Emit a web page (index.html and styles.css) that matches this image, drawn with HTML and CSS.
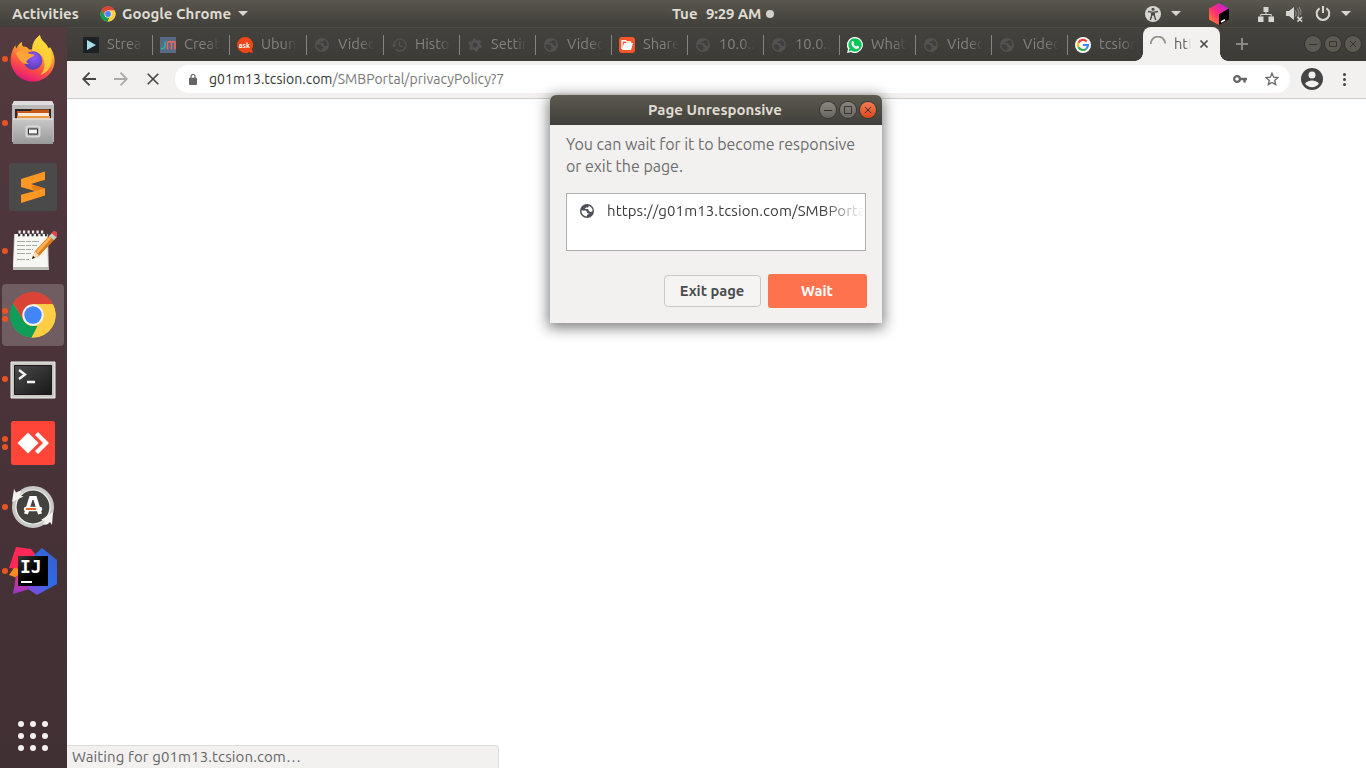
FILE: index.html
```html
<!DOCTYPE html>
<html lang="en">
<head>
<meta charset="utf-8">
<title>Page Unresponsive</title>
<link rel="stylesheet" href="styles.css">
</head>
<body>
<svg class="defs" width="0" height="0" aria-hidden="true">
  <defs>
    <linearGradient id="ffBody" x1=".7" y1="0" x2=".3" y2="1"><stop offset="0" stop-color="#fff44f"/><stop offset=".35" stop-color="#ffa930"/><stop offset=".65" stop-color="#ff5540"/><stop offset="1" stop-color="#e2127e"/></linearGradient>
    <radialGradient id="ffGlobe" cx=".55" cy=".35" r=".65"><stop offset="0" stop-color="#9059ff"/><stop offset="1" stop-color="#5b3cae"/></radialGradient>
    <linearGradient id="silver" x1="0" y1="0" x2="0" y2="1"><stop offset="0" stop-color="#c9c9c9"/><stop offset="1" stop-color="#999"/></linearGradient>
    <linearGradient id="term" x1="0" y1="0" x2="1" y2="1"><stop offset="0" stop-color="#4b4b4b"/><stop offset="1" stop-color="#171717"/></linearGradient>
    <linearGradient id="cube" x1="0" y1="1" x2="1" y2="0"><stop offset="0" stop-color="#ff9419"/><stop offset=".45" stop-color="#ff2f72"/><stop offset="1" stop-color="#af1df5"/></linearGradient>
    <linearGradient id="ijBlue" x1="0" y1="1" x2="1" y2="0"><stop offset="0" stop-color="#8f44d8"/><stop offset=".5" stop-color="#2c6de9"/><stop offset="1" stop-color="#3c58c9"/></linearGradient>
    <linearGradient id="ijPurple" x1="0" y1="0" x2="0" y2="1"><stop offset="0" stop-color="#e43a77"/><stop offset="1" stop-color="#9a35ca"/></linearGradient>
    <linearGradient id="ijBox" x1="0" y1="0" x2="1" y2="1"><stop offset="0" stop-color="#3a3a3a"/><stop offset=".5" stop-color="#000"/></linearGradient>
    <symbol id="globe" viewBox="0 0 16 16"><circle cx="8" cy="8" r="7" fill="currentColor"/><path class="land" d="M2.400 7.600h3.400c1.300 0 2.200.7 2.200 1.700v.8h1.500v1.400H8v1.900A5.600 5.600 0 0 1 2.400 7.600zM10 2.900 9 4.400H7L5.800 6.100h3.300l.6 1.400c.4 1 1.200 1.400 2.100 1.400l1.800-.7A5.600 5.600 0 0 0 10 2.900z"/></symbol>
    <symbol id="chrome" viewBox="0 0 48 48"><circle cx="24" cy="24" r="22.500" fill="#ffce44"/><path fill="#da4437" d="M4.100 12.500A22.500 22.500 0 0 1 44 13.200H24L14 29.500z"/><path fill="#0f9d58" d="M4.100 12.500 14.600 29.400Q18 35 24 35h4.500L22.600 46.500A22.500 22.500 0 0 1 4.100 12.500z"/><path fill="#ffce44" d="M24 13.200h20A22.500 22.500 0 0 1 22.600 46.500l10.900-18z"/><circle cx="24" cy="24" r="10.700" fill="#f3f3f3"/><circle cx="24" cy="24" r="8.700" fill="#4285f4"/></symbol>
  </defs>
</svg>

<div class="desktop">
  <header class="panel">
    <span class="activities">Activities</span>
    <div class="app-menu"><svg width="16" height="16"><use href="#chrome"/></svg><span>Google Chrome</span><i class="caret"></i></div>
    <div class="clock"><span>Tue</span><span>9:29 AM</span><i></i></div>
    <div class="indicators">
      <svg class="access" width="16" height="16" viewBox="0 0 16 16"><circle cx="8" cy="8" r="8" fill="#d8d6d2"/><circle cx="8" cy="3.300" r="1.500" fill="#4b4a44"/><path d="M3 5.500 8 6.400l5-.9M8 6v3.500M6.700 6v3.500L5.300 14M9.300 6v3.500L10.700 14" fill="none" stroke="#4b4a44" stroke-width="1.400"/></svg>
      <i class="caret caret-a"></i>
      <svg class="toolbox" width="20" height="22" viewBox="0 0 20 22"><path fill="url(#cube)" d="M10 0 20 5.400v11L10 22 0 16.500v-11z"/><path fill="#000" d="m10 11.300 10-5.700v10.800L10 22z"/><path stroke="#fff" stroke-width="1.800" d="m12 19 4-2.200"/></svg>
      <svg class="network" width="16" height="16" viewBox="0 0 16 16"><path fill="#d8d6d2" d="M5.500 1h5v5h-5zM0 10.500h5.500V16H0zM10.500 10.500H16V16h-5.500z"/><path d="M8 6v2.500M2.700 10.500v-2h10.600v2" fill="none" stroke="#d8d6d2"/></svg>
      <svg class="volume" width="18" height="16" viewBox="0 0 18 16"><path fill="#d8d6d2" d="M0 5h3l5-4v13l-5-4H0z"/><path d="M9.300 4.500q2 3 0 6M11.300 2.500q3.400 4.800 0 9.600M13 1q3 4.500 1.500 8" fill="none" stroke="#8b8983" stroke-width="1.100"/><path d="m11.500 11 4.500 4.500m0-4.500-4.500 4.500" stroke="#d8d6d2" stroke-width="1.700"/></svg>
      <svg class="power" width="16" height="16" viewBox="0 0 16 16"><path d="M4.600 2.300a6.300 6.300 0 1 0 6.800 0M8 0v7" fill="none" stroke="#d8d6d2" stroke-width="2"/></svg>
      <i class="caret caret-b"></i>
    </div>
  </header>

  <div class="workspace">
    <nav class="dock">
      <div class="dock-item one"><svg width="48" height="48" viewBox="0 0 48 48"><path fill="url(#ffBody)" d="M31 0c0 3 2 5 5 8 1.700 1.500 2.500 3.500 3 5.500 1 0 1.500-.5 2-1.500 4 6 6 13 3.500 20.500A22.300 22.300 0 0 1 2.500 31C0 23 3 15 6.500 10c0 1.500.3 2.500 1 3.500 1-2.500 3-5.500 5.500-6.500-.2 2 .2 3.500 1 4.500 3 0 5 1 6 3h3c0-6 3-11 8-14.500z"/><path fill="#ffd63a" d="M31 0c0 4 2.500 6 5.500 9 5 5 7.500 11 6 19-2 7-6 10-11 12 4-5 5-10 3-16-2-5-6-8-11-8 0-6 3-12 7.500-16z" opacity=".85"/><circle cx="24" cy="25.500" r="9.300" fill="url(#ffGlobe)"/><path fill="#ffa436" d="M7 18c4-4 8-3 12.500.5 3 .8 5 .6 6 1.300-.5 2-4 2.400-6.500 4.700-2 2-2.500 3 1 4.500-7 1-11-5-13-11z"/></svg></div>
      <div class="dock-item one"><svg width="48" height="48" viewBox="0 0 48 48"><path fill="#b9b9b9" d="M5 2h38l2 4v37H3V6z"/><path fill="#dedede" d="M5 2h38l2 4H3z"/><path fill="#272727" d="M6 10h36v12H6z"/><path fill="#c55a19" d="M8 12h14l1-1.500h17V22H8z"/><path fill="#f8e9d8" d="M9 14h31v3H9z"/><path fill="#eb9a43" d="M8 17h33v3H8z"/><path fill="url(#silver)" d="M4 19.500h40V45H4z"/><path stroke="#eee" d="M4 20h40"/><rect x="17.500" y="27.500" width="13" height="10" rx="1.500" fill="#999" stroke="#d9d9d9" stroke-width="2"/><path fill="#f3f3f3" stroke="#333" d="M19.500 30h9v5h-9z"/></svg></div>
      <div class="dock-item"><svg width="48" height="48" viewBox="0 0 48 48"><rect width="48" height="48" rx="3" fill="#4a4a4a"/><path fill="#ff9822" d="m12 16 24-7.500v8.300L22 21l14 4.500v7L12 40v-8.200L26 28l-14-4z"/><path fill="#e57c12" d="m36 25.500-10-3-4 1.200 4 4.300z"/></svg></div>
      <div class="dock-item one"><svg width="48" height="48" viewBox="0 0 48 48"><path fill="#bcbcb6" d="M5 7h34l1 36H4z"/><path fill="#f6f6f3" d="M6 7h32l1 33H4z"/><path stroke="#333" stroke-width="2.300" stroke-dasharray="2.200 2.300" d="M9 8h29"/><path stroke="#eee" stroke-width="3" stroke-dasharray="2.200 2.300" d="M9.500 5h27"/><path stroke="#a9a9a6" stroke-dasharray="8 1 5 1" d="M8 14.500h22M8 18.500h20M8 22.500h16M8 26.500h14M8 32.500h12"/><path fill="#db7b1d" d="m23 32 3-8L41 8l5 4-16 17z"/><path fill="#ffb14f" d="m27 24 14-15 2 1.500-14 16z"/><path fill="#f6ddb8" d="m23 32 3-8 4 4.500z"/><path d="m23 32 1-3 2 1.500z"/><path fill="#c9c9c9" d="m40 9 3-3 5 4-3 3z"/><path fill="#df4545" d="m42.500 6 2-2q3-.5 4.500 3l-2 3z"/></svg></div>
      <div class="dock-item two active"><svg width="48" height="48" viewBox="0 0 48 48"><use href="#chrome"/></svg></div>
      <div class="dock-item one"><svg width="48" height="48" viewBox="0 -1 48 48"><path fill="#c9c9c5" stroke="#f0f0ee" d="M2 6h44v36H2z"/><path fill="url(#term)" stroke="#191919" d="M5.500 9.500h37v29h-37z"/><path d="m10 14 6 4.500-6 4.500M18 26h8" fill="none" stroke="#f5f5f5" stroke-width="2.300"/></svg></div>
      <div class="dock-item two"><svg width="48" height="48" viewBox="0 0 48 48"><rect x="2" y="2" width="44" height="44" rx="2.500" fill="#ff4438"/><path fill="#fff" d="m19 13.500 10.500 10.500L19 34.500 8.500 24zM26 16l3-3 11 11-11 11-3-3 8-8z"/></svg></div>
      <div class="dock-item one"><svg width="48" height="48" viewBox="0 0 48 48"><circle cx="24" cy="24" r="19" fill="#43423e" stroke="#c8c8c6" stroke-width="4"/><circle cx="24" cy="24" r="17" fill="none" stroke="#f1f1ef" stroke-width="1.200"/><path fill="#f2f2ef" d="m5 6 2 3.500q3-2 5-1.500l-1 4.500 3.500 1L3 19z"/><path fill="#f2f2ef" d="m44 29-1 13-2-3q-3 4-7 2l2-3-4-1z"/><path fill="none" stroke="#fff" stroke-width="4" d="m17 31 5-16h4l5 16"/><path stroke="#fff" stroke-width="4.500" stroke-linecap="round" d="M17 26h14"/><path stroke="#ee651e" stroke-width="2" d="M17 26h10"/></svg></div>
      <div class="dock-item one"><svg width="48" height="48" viewBox="0 0 48 48"><path fill="#ff2857" d="m7 0 15 2 9 11-18 10L0 21z"/><path fill="#ff8a23" d="m5 21 9 1v11L0 28z"/><path fill="url(#ijPurple)" d="m7 29 16-3 4 14L4 47z"/><path fill="url(#ijBlue)" d="m33 1 15 12v24L28 48l-9-6 2-30z"/><path fill="url(#ijBox)" d="M9 9h30v30H9z"/><path fill="#fff" d="M12 34h11v2H12z"/><text x="11" y="26" class="ij">IJ</text></svg></div>
      <div class="apps"><i></i><i></i><i></i><i></i><i></i><i></i><i></i><i></i><i></i></div>
    </nav>

    <main class="browser">
      <div class="tabstrip">
        <div class="tab wide"><svg width="16" height="16"><path fill="#1b2226" d="M0 0h16v16H0z"/><path fill="#a9dce9" d="m4 3 9 5-9 5z"/></svg><span>Strea</span></div>
        <div class="tab wide"><svg width="16" height="16"><path fill="#566985" d="M0 0h16v16H0z"/><path d="M5 4.500v4.500q0 3-4 2.500" fill="none" stroke="#29b8a6" stroke-width="1.500"/><path d="M7.500 12.500V5.500q3.500-2 4 0v7m0-7q3.500-2 3.500 0v7" fill="none" stroke="#ee6a5d" stroke-width="1.500"/></svg><span>Creat</span></div>
        <div class="tab wide"><svg width="16" height="16"><path fill="#ef4617" d="M8 0a8 8 0 1 0 4 15l4 1-1-4A8 8 0 0 0 8 0z"/><text x="1.800" y="10.500" class="ask">ask</text></svg><span>Ubun</span></div>
        <div class="tab wide"><svg width="16" height="16"><use href="#globe"/></svg><span>Video</span></div>
        <div class="tab"><svg width="16" height="16" viewBox="0 0 16 16"><path d="M3 8a6 6 0 1 1 1.800 4.200M8.500 4.500v4l3 1.700" fill="none" stroke="currentColor" stroke-width="1.400"/><path fill="currentColor" d="M0 7.500h6l-3 3z"/></svg><span>Histo</span></div>
        <div class="tab"><svg width="16" height="16" viewBox="0 0 16 16"><circle cx="8" cy="8" r="3.800" fill="none" stroke="currentColor" stroke-width="2.800"/><circle cx="8" cy="8" r="5.800" fill="none" stroke="currentColor" stroke-width="2" stroke-dasharray="3.040 3.040"/></svg><span>Settin</span></div>
        <div class="tab"><svg width="16" height="16"><use href="#globe"/></svg><span>Video</span></div>
        <div class="tab"><svg width="16" height="16"><rect width="16" height="16" rx="3" fill="#f1572b"/><path fill="none" stroke="#fff" stroke-width="1.400" d="M3 12V3.700h3.500L8 5h3.500v2"/><path fill="#fff" d="M5 6h9l-2 7H3z"/></svg><span>Share</span></div>
        <div class="tab"><svg width="16" height="16"><use href="#globe"/></svg><span>10.0.2</span></div>
        <div class="tab"><svg width="16" height="16"><use href="#globe"/></svg><span>10.0.2</span></div>
        <div class="tab"><svg width="16" height="16"><path fill="#fff" d="M8 0a8 8 0 1 1-4 15l-4 1 1-4A8 8 0 0 1 8 0z"/><path fill="#06c755" d="M8 1.300a6.700 6.700 0 1 1-3.500 12.400l-2.800.7.800-2.800A6.700 6.700 0 0 1 8 1.300z"/><path fill="#fff" d="M5.300 4h1l1 2.100-.8 1q1 1.900 2.700 2.500l1-1 2 1q0 2-2.200 2.400C6 11.500 2.800 7 5.300 4z"/></svg><span>What</span></div>
        <div class="tab"><svg width="16" height="16"><use href="#globe"/></svg><span>Video</span></div>
        <div class="tab"><svg width="16" height="16"><use href="#globe"/></svg><span>Video</span></div>
        <div class="tab last"><svg width="16" height="16"><circle cx="8" cy="8" r="8" fill="#fff"/><g fill="none" stroke-width="2.200"><path stroke="#ea4335" d="M3.500 5.700A5 5 0 0 1 11.700 4.500"/><path stroke="#fbbc05" d="M3.500 10.300a5 5 0 0 1 0-4.600"/><path stroke="#34a853" d="M3.500 10.300a5 5 0 0 0 7.800 1.400"/><path stroke="#4285f4" d="M8 8h5a5 5 0 0 1-1.700 3.700"/></g></svg><span>tcsion</span></div>
        <div class="tab current"><svg width="16" height="16"><path d="M.8 8A7.200 7.200 0 0 1 15.200 7.500" fill="none" stroke="#98948d" stroke-width="1.800"/></svg><span>htt</span><svg class="close" width="10" height="10"><path d="m1.500 1.500 7 7m0-7-7 7" stroke="#4a4a4a" stroke-width="1.700"/></svg></div>
        <svg class="newtab" width="12" height="12"><path d="M6 0v12M0 6h12" stroke="#8b8983" stroke-width="2"/></svg>
        <div class="winbtns dim"><svg viewBox="0 0 16 16"><path d="M4 8.500h8"/></svg><svg viewBox="0 0 16 16"><path d="M4.500 5.500h7v5h-7z"/></svg><svg viewBox="0 0 16 16"><path d="m5 5 6 6m0-6-6 6"/></svg></div>
      </div>

      <div class="toolbar">
        <svg class="back" width="14" height="14" viewBox="0 0 14 14"><path d="M14 7H1M7.500.7 1.200 7l6.300 6.300" fill="none" stroke="#454545" stroke-width="1.800"/></svg>
        <svg class="forward" width="14" height="14" viewBox="0 0 14 14"><path d="M0 7h13M6.500.7 12.800 7l-6.300 6.300" fill="none" stroke="#aaa" stroke-width="1.800"/></svg>
        <svg class="stop" width="12" height="12"><path d="m.7.7 10.600 10.600m0-10.600L.7 11.300" stroke="#454545" stroke-width="1.600"/></svg>
        <div class="omnibox">
          <svg class="lock" width="8" height="11" viewBox="0 0 8 11"><rect y="3.800" width="8" height="7.200" rx=".8" fill="#666"/><path d="M2 4V2.500a2 2 0 0 1 4 0V4" fill="none" stroke="#666" stroke-width="1.200"/></svg>
          <span class="url">g01m13.tcsion.com<em>/SMBPortal/privacyPolicy?7</em></span>
          <svg class="key" width="14" height="8" viewBox="0 0 14 8"><circle cx="4" cy="4" r="2.900" fill="none" stroke="#666" stroke-width="2.200"/><path fill="#666" d="M6.500 2.800H14v2.400h-1.200V7.500h-2.500V5.200H6.500z"/></svg>
          <svg class="star" width="14" height="14" viewBox="0 0 14 14"><path d="m7 1.200 1.700 4 4.300.4-3.300 2.800 1 4.200L7 10.400l-3.700 2.200 1-4.200L1 5.600l4.300-.4z" fill="none" stroke="#666" stroke-width="1.300"/></svg>
        </div>
        <svg class="avatar" width="22" height="22" viewBox="0 0 22 22"><circle cx="11" cy="11" r="11" fill="#454545"/><circle cx="11" cy="7" r="3.500" fill="#f2f1f0"/><path fill="#f2f1f0" d="M4.200 15.700C5.200 13.500 9 12.600 11 12.600s5.800.9 6.800 3.100a8.200 8.200 0 0 1-13.600 0z"/></svg>
        <div class="kebab"><i></i><i></i><i></i></div>
      </div>

      <section class="page"><div class="status">Waiting for g01m13.tcsion.com…</div></section>
    </main>
  </div>

  <div class="dialog">
    <div class="dialog-title"><span>Page Unresponsive</span>
      <div class="winbtns"><svg viewBox="0 0 16 16"><path d="M4 8.500h8"/></svg><svg viewBox="0 0 16 16"><path d="M4.500 4.500h7v7h-7z"/></svg><svg class="red" viewBox="0 0 16 16"><path d="m5 5 6 6m0-6-6 6"/></svg></div>
    </div>
    <div class="dialog-body">
      <p>You can wait for it to become responsive<br><span>or exit the page.</span></p>
      <div class="pages"><svg width="16" height="16"><use href="#globe"/></svg><span>https://g01m13.tcsion.com/SMBPorta</span></div>
      <div class="actions"><button class="exit">Exit page</button><button class="wait">Wait</button></div>
    </div>
  </div>
</div>
</body>
</html>
```
FILE: styles.css
```css
* { box-sizing: border-box; }
body { margin: 0; font-family: Ubuntu, "Noto Sans", "Open Sans", sans-serif; font-size: 15px; }
.defs { position: absolute; }
svg { display: block; flex: none; }
.land { fill: var(--land, #403f3b); }
.desktop { position: relative; width: 1366px; height: 768px; overflow: hidden; display: flex; flex-direction: column; background: #fff; }

.panel { height: 27px; flex: none; display: grid; grid-template-columns: 100px 572px 1fr auto; align-items: center; background: linear-gradient(#59564d, #403f3a); color: #dfdbd2; font-weight: 600; white-space: nowrap; }
.activities { padding-left: 12px; }
.app-menu { display: flex; align-items: center; gap: 6px; }
.app-menu span { width: 110px; }
.caret { width: 0; height: 0; border: 5px solid transparent; border-top-color: #d8d6d2; border-bottom: 0; }
.clock { display: flex; align-items: center; }
.clock span:first-child { width: 34px; }
.clock span + span { width: 60px; letter-spacing: -.2px; }
.clock i { width: 8px; height: 8px; border-radius: 50%; background: #d2d0cb; }
.indicators { display: flex; align-items: center; width: 221px; }
.caret-a { margin-left: 10px; }
.toolbox { margin-left: 28px; }
.network { margin-left: 29px; }
.volume { margin-left: 12px; }
.power { margin-left: 11px; }
.caret-b { margin-left: 10px; }

.workspace { flex: 1; display: flex; min-height: 0; }
.dock { width: 67px; flex: none; display: flex; flex-direction: column; background: linear-gradient(#533a3e, #4a343a 45%, #402f33); }
.dock-item { position: relative; height: 64px; width: 66px; flex: none; display: grid; place-items: center; }
.dock-item.active::after { content: ""; position: absolute; inset: 1px 2px; border-radius: 4px; background: rgba(255,255,255,.2); }
.dock-item svg { position: relative; z-index: 1; }
.dock-item.one::before, .dock-item.two::before { content: ""; position: absolute; z-index: 1; left: 2px; top: 29px; width: 6px; height: 6px; border-radius: 50%; background: #e95420; }
.dock-item.two::before { top: 25px; box-shadow: 0 8px #e95420; }
.ij { font: bold 18px "DejaVu Sans Mono", monospace; fill: #fff; }
.apps { margin: auto 0 17px 18px; display: grid; grid-template-columns: repeat(3, 6px); gap: 6px; }
.apps i { width: 6px; height: 6px; border-radius: 50%; background: #f2f1f0; }

.browser { flex: 1; min-width: 0; display: flex; flex-direction: column; }
.tabstrip { height: 34px; flex: none; display: flex; padding-left: 9px; background: linear-gradient(#43423d, #3c3b37); border-top: 1px solid #4b4a44; }
.tab { width: 76px; flex: none; display: flex; align-items: center; gap: 8px; padding-left: 7px; color: #535352; background: linear-gradient(#85837d, #85837d) right 0 top 7px / 1px 20px no-repeat; }
.tab.wide { width: 77px; }
.tab span { width: 36px; margin-top: -2px; overflow: hidden; white-space: nowrap; color: #85837d; font-size: 14.67px; mask-image: linear-gradient(90deg, #000 62%, transparent); }
.tab.last { width: 75px; background: none; }
.ask { font: bold 7px Ubuntu, "Noto Sans", sans-serif; fill: #fff; }
.tab.current { position: relative; width: 77px; margin-top: -1px; background: #f2f1f0; border-radius: 8px 8px 0 0; }
.tab.current::before, .tab.current::after { content: ""; position: absolute; bottom: 0; width: 8px; height: 8px; }
.tab.current::before { left: -8px; background: radial-gradient(circle at 0 0, transparent 7.5px, #f2f1f0 8px); }
.tab.current::after { right: -8px; background: radial-gradient(circle at 100% 0, transparent 7.5px, #f2f1f0 8px); }
.tab.current span { width: 17px; color: #5b5b59; }
.newtab { margin: 10px 0 0 16px; }
.winbtns { display: flex; gap: 4px; }
.winbtns svg { width: 16px; height: 16px; border-radius: 50%; background: linear-gradient(#8a877f, #686660); box-shadow: 0 0 0 1px #373631; fill: none; stroke: #35342f; }
.winbtns .red { background: linear-gradient(#f67a52, #dc4719); }
.winbtns.dim { margin: 8px 0 0 auto; padding-right: 5px; }
.winbtns.dim svg { background: #5c5a53; box-shadow: 0 0 0 1px #35342f; }

.toolbar { height: 38px; flex: none; display: flex; align-items: center; padding: 0 19px 1px 15px; background: #f2f1f0; border-bottom: 1px solid #ccc; }
.forward { margin-left: 18px; }
.stop { margin-left: 19px; }
.omnibox { margin-left: 16px; width: 1115px; height: 28px; padding: 0 11px 0 14px; display: flex; align-items: center; border-radius: 14px; background: #fff; }
.url { margin-left: 12px; font-size: 14px; color: #333; white-space: nowrap; letter-spacing: .03px; }
.url em { font-style: normal; color: #777; }
.key { margin-left: auto; }
.star { margin-left: 18px; }
.avatar { margin-left: 11px; }
.kebab { margin-left: 20px; display: grid; gap: 2px; }
.kebab i { width: 3px; height: 3px; border-radius: 50%; background: #454545; }
.page { flex: 1; display: flex; align-items: flex-end; background: #fff; }
.status { width: 432px; height: 23px; padding-left: 5px; border: solid #dcdcdb; border-width: 1px 1px 0 0; border-radius: 0 4px 0 0; background: #f2f1f0; color: #666; line-height: 22px; letter-spacing: .12px; }

.dialog { position: absolute; left: 550px; top: 95px; width: 332px; height: 228px; border-radius: 6px 6px 0 0; background: #f2f1f0; box-shadow: 0 3px 14px 2px rgba(0,0,0,.5); }
.dialog-title { height: 30px; display: flex; align-items: center; padding: 0 6px 0 98px; border-radius: 6px 6px 0 0; background: linear-gradient(#5c594f, #403f3a); color: #dfdbd2; font-weight: 600; white-space: nowrap; }
.dialog-title span { margin-top: -1px; }
.dialog-title .winbtns { margin-left: auto; }
.dialog-body { padding: 8px 15px 0 16px; }
.dialog p { margin: 0; height: 60px; line-height: 22px; font-size: 16px; letter-spacing: -.03px; color: #6e6e6e; white-space: nowrap; }
.pages { --land: #fff; width: 300px; height: 58px; padding: 9px 1px 0 12px; display: flex; gap: 12px; border: 1px solid #b0b0ae; background: #fff; color: #4d5157; }
.pages span { height: 18px; line-height: 16px; flex: 1; min-width: 0; white-space: nowrap; letter-spacing: .12px; color: #3c3c3c; mask-image: linear-gradient(90deg, #000 84%, transparent); }
.actions { margin-top: 23px; display: flex; align-items: center; justify-content: flex-end; gap: 7px; }
button { border: 0; padding: 0 1px 1px 0; font: 600 14.67px Ubuntu, "Noto Sans", sans-serif; }
.exit { width: 97px; height: 32px; border: 1px solid #c9c8c6; border-radius: 4px; background: #f5f4f3; color: #4a4d50; }
.wait { width: 99px; height: 34px; border-radius: 3px; background: #ff724e; color: #fff; }
```
